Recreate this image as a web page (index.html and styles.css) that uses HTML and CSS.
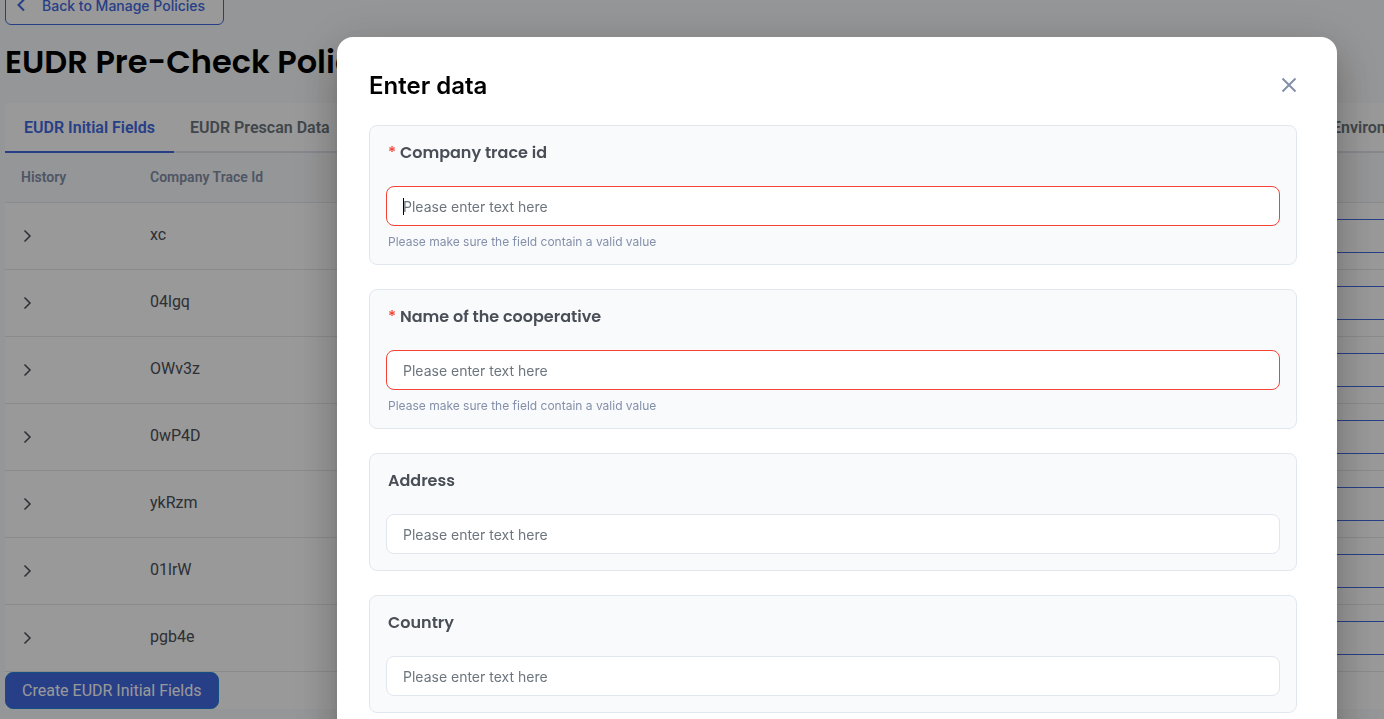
FILE: index.html
```html
<!DOCTYPE html>
<html lang="en">
<head>
<meta charset="utf-8">
<title>EUDR Pre-Check Policy</title>
<link rel="stylesheet" href="styles.css">
</head>
<body>
<main class="page">
  <button class="back-button" type="button">
    <svg class="back-icon" viewBox="0 0 14 14" aria-hidden="true"><path d="M10 1.500 4.500 7l5.500 5.500"/></svg>
    Back to Manage Policies
  </button>
  <h1 class="page-title">EUDR Pre-Check Policy</h1>
  <section class="panel">
    <nav class="tabs">
      <button class="tab tab-active" type="button">EUDR Initial Fields</button>
      <button class="tab" type="button">EUDR Prescan Data</button>
      <button class="tab tab-last" type="button">Environment</button>
    </nav>
    <table class="grid">
      <thead>
        <tr><th class="col-history">History</th><th class="col-trace">Company Trace Id</th><th></th><th class="col-action"></th></tr>
      </thead>
      <tbody>
        <tr><td><button class="expand" type="button" aria-label="Expand"><svg viewBox="0 0 14 14"><path d="m3.500 1.500 5.500 5.500-5.500 5.500"/></svg></button></td><td>xc</td><td></td><td class="action-cell"><button class="action" type="button" aria-label="Open"></button></td></tr>
        <tr><td><button class="expand" type="button" aria-label="Expand"><svg viewBox="0 0 14 14"><path d="m3.500 1.500 5.500 5.500-5.500 5.500"/></svg></button></td><td>04lgq</td><td></td><td class="action-cell"><button class="action" type="button" aria-label="Open"></button></td></tr>
        <tr><td><button class="expand" type="button" aria-label="Expand"><svg viewBox="0 0 14 14"><path d="m3.500 1.500 5.500 5.500-5.500 5.500"/></svg></button></td><td>OWv3z</td><td></td><td class="action-cell"><button class="action" type="button" aria-label="Open"></button></td></tr>
        <tr><td><button class="expand" type="button" aria-label="Expand"><svg viewBox="0 0 14 14"><path d="m3.500 1.500 5.500 5.500-5.500 5.500"/></svg></button></td><td>0wP4D</td><td></td><td class="action-cell"><button class="action" type="button" aria-label="Open"></button></td></tr>
        <tr><td><button class="expand" type="button" aria-label="Expand"><svg viewBox="0 0 14 14"><path d="m3.500 1.500 5.500 5.500-5.500 5.500"/></svg></button></td><td>ykRzm</td><td></td><td class="action-cell"><button class="action" type="button" aria-label="Open"></button></td></tr>
        <tr><td><button class="expand" type="button" aria-label="Expand"><svg viewBox="0 0 14 14"><path d="m3.500 1.500 5.500 5.500-5.500 5.500"/></svg></button></td><td>01lrW</td><td></td><td class="action-cell"><button class="action" type="button" aria-label="Open"></button></td></tr>
        <tr><td><button class="expand" type="button" aria-label="Expand"><svg viewBox="0 0 14 14"><path d="m3.500 1.500 5.500 5.500-5.500 5.500"/></svg></button></td><td>pgb4e</td><td></td><td class="action-cell"><button class="action" type="button" aria-label="Open"></button></td></tr>
      </tbody>
    </table>
    <button class="create-button" type="button">Create EUDR Initial Fields</button>
  </section>
</main>
<div class="overlay">
  <div class="dialog" role="dialog" aria-labelledby="dialog-title">
    <header class="dialog-header">
      <h2 class="dialog-title" id="dialog-title">Enter data</h2>
      <button class="close" type="button" aria-label="Close"><svg viewBox="0 0 16 16"><path d="m1.500 1.500 13 13m0-13-13 13"/></svg></button>
    </header>
    <form class="fields">
      <div class="field">
        <label class="field-label" for="trace"><span class="required">*</span> Company trace id</label>
        <div class="control">
          <input class="text-input invalid" id="trace" type="text" placeholder="Please enter text here">
          <span class="caret"></span>
        </div>
        <p class="hint">Please make sure the field contain a valid value</p>
      </div>
      <div class="field">
        <label class="field-label" for="coop"><span class="required">*</span> Name of the cooperative</label>
        <div class="control"><input class="text-input invalid" id="coop" type="text" placeholder="Please enter text here"></div>
        <p class="hint">Please make sure the field contain a valid value</p>
      </div>
      <div class="field">
        <label class="field-label" for="address">Address</label>
        <div class="control"><input class="text-input" id="address" type="text" placeholder="Please enter text here"></div>
      </div>
      <div class="field">
        <label class="field-label" for="country">Country</label>
        <div class="control"><input class="text-input" id="country" type="text" placeholder="Please enter text here"></div>
      </div>
    </form>
  </div>
</div>
</body>
</html>
```

FILE: styles.css
```css
* { box-sizing: border-box; }

body {
  margin: 0;
  height: 100vh;
  overflow: hidden;
  background: #f9fafc;
  font-family: Roboto, sans-serif;
  color: #4a4f57;
}

button { font-family: inherit; cursor: pointer; }

svg {
  display: block;
  fill: none;
  stroke: currentColor;
}

.page {
  margin-top: -15px;
  padding-left: 5px;
}

.back-button {
  display: flex;
  align-items: center;
  gap: 14px;
  height: 40px;
  padding: 0 18px 0 8px;
  border: 1px solid #4169e2;
  border-radius: 6px;
  background: #fff;
  color: #4169e2;
  font-family: Inter, sans-serif;
  font-size: 14px;
  font-weight: 500;
}

.back-icon {
  width: 14px;
  height: 14px;
  stroke-width: 2;
}

.page-title {
  margin: 13px 0 17px;
  color: #000;
  font: 600 32px/48px Poppins, Inter, sans-serif;
  white-space: nowrap;
}

.panel { background: #fff; }

.tabs {
  display: flex;
  height: 50px;
  overflow: hidden;
  box-shadow: inset 0 -2px #dfe3ea;
}

.tab {
  flex: none;
  padding: 0 16px;
  border: 0;
  border-bottom: 2px solid transparent;
  background: transparent;
  color: #6c757d;
  font-size: 16px;
  font-weight: 600;
  text-align: left;
  white-space: nowrap;
}

.tab-active {
  min-width: 169px;
  border-color: #4169e2;
  color: #4169e2;
  text-align: center;
}

.tab-last {
  width: 68px;
  margin-left: auto;
}

.grid {
  width: 100%;
  table-layout: fixed;
  border-collapse: separate;
  border-spacing: 0;
}

.grid th {
  height: 50px;
  padding: 0 16px 2px;
  border-bottom: 1px solid #e6e8ec;
  background: #f9fafc;
  color: #848fa9;
  font-size: 14px;
  font-weight: 600;
  text-align: left;
}

.grid td {
  height: 67px;
  padding: 0 16px 4px;
  border-bottom: 1px solid #e6e8ec;
  font-size: 16px;
}

.grid .col-history { width: 129px; }
.grid .col-trace { width: 260px; }
.grid .col-action { width: 120px; }

.grid .action-cell { padding: 0; }

.expand {
  display: block;
  margin-top: 4px;
  padding: 0;
  border: 0;
  background: transparent;
  color: #4a4f57;
}

.expand svg {
  width: 14px;
  height: 14px;
  stroke-width: 1.500;
}

.action {
  display: block;
  width: 100%;
  height: 34px;
  border: 1px solid #4169e2;
  border-right: 0;
  background: transparent;
}

.create-button {
  display: block;
  height: 37px;
  padding: 0 16px;
  border: 1px solid #2382de;
  border-radius: 8px;
  background: #4169e2;
  color: #fff;
  font-size: 16px;
}

.overlay {
  position: fixed;
  inset: 0;
  display: flex;
  align-items: flex-start;
  justify-content: flex-end;
  padding: 37px 47px 0;
  overflow: hidden;
  background: rgba(0, 0, 0, 0.4);
}

.dialog {
  width: 100%;
  max-width: 1000px;
  padding: 32px 40px 32px 32px;
  border-radius: 16px;
  background: #fff;
  box-shadow: 0 11px 15px -7px rgba(0, 0, 0, 0.2), 0 24px 38px 3px rgba(0, 0, 0, 0.14), 0 9px 46px 8px rgba(0, 0, 0, 0.12);
  font-family: Inter, sans-serif;
}

.dialog-header {
  display: flex;
  align-items: center;
  justify-content: space-between;
  height: 32px;
  margin-bottom: 24px;
}

.dialog-title {
  margin: 2px 0 0;
  color: #000;
  font-size: 24px;
  font-weight: 600;
  line-height: 32px;
}

.close {
  padding: 0;
  border: 0;
  background: transparent;
  color: #848fa9;
}

.close svg {
  width: 16px;
  height: 16px;
  stroke-width: 2;
}

.fields {
  display: grid;
  gap: 24px;
}

.field {
  padding: 15px 16px 16px;
  border: 1px solid #e1e7ef;
  border-radius: 8px;
  background: #f9fafc;
}

.field-label {
  display: block;
  margin-bottom: 21px;
  padding-left: 2px;
  font: 600 16px/24px Poppins, Inter, sans-serif;
}

.required {
  color: #f44336;
  font-weight: 500;
}

.control { position: relative; }

.text-input {
  display: block;
  width: 100%;
  height: 40px;
  padding: 0 16px;
  border: 1px solid #e1e7ef;
  border-radius: 8px;
  background: #fff;
  font-family: Inter, sans-serif;
  font-size: 14px;
}

.text-input::placeholder { color: #6c757d; }

.invalid { border-color: #f44336; }

.caret {
  position: absolute;
  top: 12px;
  left: 17px;
  width: 1px;
  height: 17px;
  background: #000;
}

.hint {
  margin: 8px 0 -2px;
  padding-left: 2px;
  color: #848fa9;
  font-size: 12px;
  line-height: 16px;
}
```
